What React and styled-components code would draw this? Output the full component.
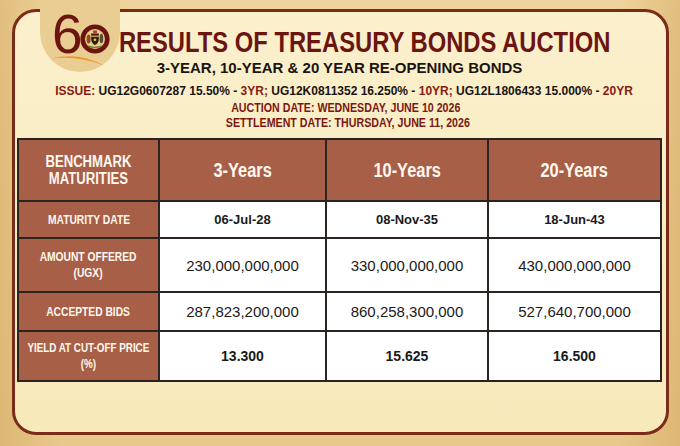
import React from 'react';
import styled, { createGlobalStyle } from 'styled-components';

const GlobalStyle = createGlobalStyle`
  html, body { margin: 0; padding: 0; }
  body {
    width: 680px;
    height: 446px;
    overflow: hidden;
    font-family: "Liberation Sans", Arial, sans-serif;
  }
  * { box-sizing: border-box; }
`;

const FONT = `"Liberation Sans", Arial, sans-serif`;

const Stage = styled.div`
  width: 680px;
  height: 446px;
  padding: 9px 11px 11px 12px;
  background:
    linear-gradient(90deg, rgba(196, 140, 60, 0.3) 0%, rgba(196, 140, 60, 0) 9%, rgba(196, 140, 60, 0) 91%, rgba(196, 140, 60, 0.3) 100%),
    linear-gradient(180deg, #eed49c 0%, #e8c98b 100%);
`;

const Panel = styled.div`
  position: relative;
  height: 100%;
  border: 3px solid #7a2c19;
  border-radius: 24px;
  background: linear-gradient(180deg, #fbf0cc 0%, #f8e9bb 100%);
  padding: 16px 4px 0 2px;
  display: flex;
  flex-direction: column;
`;

const LogoTab = styled.div`
  position: absolute;
  left: 25px;
  top: -12px;
  width: 80px;
  height: 72px;
  border-radius: 0 0 40px 40px;
  background: #eacd92;
`;

const Header = styled.header`
  display: flex;
  flex-direction: column;
  align-items: center;
`;

/* condensed lettering: the source face is a narrow one */
const Squeeze = styled.span`
  display: inline-block;
  white-space: nowrap;
  transform: translateX(${p => p.$dx || 0}px) scaleX(${p => p.$sx || 0.82});
  transform-origin: center;
`;

const Title = styled.h1`
  margin: 0;
  font-family: ${FONT};
  font-weight: 700;
  font-size: 29px;
  line-height: 29px;
  color: #6b1511;
  white-space: nowrap;
`;

const Subtitle = styled.h2`
  margin: 2px 0 0;
  font-family: ${FONT};
  font-weight: 700;
  font-size: 15px;
  line-height: 18px;
  color: #1b1410;
  white-space: nowrap;
`;

const IssueLine = styled.p`
  margin: 7px 0 0;
  padding-left: ${p => p.$shift || 0}px;
  font-family: ${FONT};
  font-weight: 700;
  font-size: 12px;
  line-height: 15px;
  color: #1b1410;
  white-space: nowrap;
`;

const Accent = styled.span`
  color: #861c12;
`;

const DateLine = styled.p`
  margin: ${p => (p.$first ? '1px' : '0')} 0 0;
  font-family: ${FONT};
  font-weight: 700;
  font-size: 13px;
  line-height: 15px;
  color: #7a1810;
  white-space: nowrap;
`;

const Table = styled.div`
  margin-top: 8px;
  display: grid;
  grid-template-columns: 139px 165px 160px 171px;
  grid-template-rows: 60px 35px 52px 37px 48px;
  gap: 2px;
  border: 2px solid #2a2320;
  background: #2a2320;
  width: 645px;
`;

const BrownCell = styled.div`
  display: flex;
  align-items: center;
  justify-content: center;
  text-align: center;
  overflow: visible;
  background: #a85f48;
  color: #fff8ee;
  font-family: ${FONT};
  font-weight: 700;
  font-size: ${p => p.$size || 12.5}px;
  line-height: ${p => p.$lh || 16}px;
`;

const DataCell = styled.div`
  display: flex;
  align-items: center;
  justify-content: center;
  text-align: center;
  background: #ffffff;
  color: #1a1a1a;
  font-family: ${FONT};
  font-weight: ${p => (p.$kind === 'amount' ? 400 : 700)};
  font-size: ${p => (p.$kind === 'amount' ? 15 : p.$kind === 'yield' ? 14 : 13)}px;
`;

const Logo = () => (
  <svg width="80" height="72" viewBox="0 0 80 72">
    <path d="M12 58.5 Q 38 51.5 64 65.5 Q 38 55.5 12 58.5 Z" fill="#ea9a2c" />
    <text x="12" y="53" fontFamily="Liberation Sans, Arial, sans-serif" fontSize="55" fill="#6b1410">
      6
    </text>
    <circle cx="55" cy="39" r="12.3" fill="#dcb66c" stroke="#6b1410" strokeWidth="4.6" />
    <circle cx="55" cy="39" r="9.6" fill="#e9cc86" />
    <rect x="53" y="30.5" width="4" height="2.6" rx="0.8" fill="#b8352a" />
    <ellipse cx="48.6" cy="39" rx="2" ry="4.6" fill="#8a4c22" />
    <ellipse cx="61.4" cy="38.5" rx="1.8" ry="4.8" fill="#5a4a3a" />
    <path d="M51.2 33.5 h7.6 v5.6 q0 4.2 -3.8 6 q-3.8 -1.8 -3.8 -6 z" fill="#2a1d14" />
    <rect x="51.2" y="35.6" width="7.6" height="1.2" fill="#e6bf3c" />
    <circle cx="55" cy="39.8" r="1.4" fill="#e6bf3c" />
    <path d="M48 46.2 q7 2.4 14 0" stroke="#6d7d2e" strokeWidth="1.4" fill="none" />
  </svg>
);

const years = ['3-Years', '10-Years', '20-Years'];

const rows = [
  { label: ['MATURITY DATE'], kind: 'date', values: ['06-Jul-28', '08-Nov-35', '18-Jun-43'] },
  { label: ['AMOUNT OFFERED', '(UGX)'], kind: 'amount', values: ['230,000,000,000', '330,000,000,000', '430,000,000,000'] },
  { label: ['ACCEPTED BIDS'], kind: 'amount', values: ['287,823,200,000', '860,258,300,000', '527,640,700,000'] },
  { label: ['YIELD AT CUT-OFF PRICE', '(%)'], kind: 'yield', values: ['13.300', '15.625', '16.500'], size: 12 },
];

const Lines = ({ text }) => (
  <Squeeze>
    {text.map((t, i) => (
      <React.Fragment key={i}>
        {i > 0 && <br />}
        {t}
      </React.Fragment>
    ))}
  </Squeeze>
);

export default function App() {
  return (
    <>
      <GlobalStyle />
      <Stage>
        <Panel>
          <LogoTab>
            <Logo />
          </LogoTab>
          <Header>
            <Title>
              <Squeeze $dx={25}>RESULTS OF TREASURY BONDS AUCTION</Squeeze>
            </Title>
            <Subtitle>3-YEAR, 10-YEAR &amp; 20 YEAR RE-OPENING BONDS</Subtitle>
            <IssueLine $shift={9}>
              <Accent>ISSUE:</Accent> UG12G0607287 15.50% - <Accent>3YR;</Accent> UG12K0811352 16.250% -{' '}
              <Accent>10YR;</Accent> UG12L1806433 15.000% - <Accent>20YR</Accent>
            </IssueLine>
            <DateLine $first>
              <Squeeze $dx={6}>AUCTION DATE: WEDNESDAY, JUNE 10 2026</Squeeze>
            </DateLine>
            <DateLine>
              <Squeeze $dx={8}>SETTLEMENT DATE: THURSDAY, JUNE 11, 2026</Squeeze>
            </DateLine>
          </Header>
          <Table>
            <BrownCell $size={16} $lh={17}>
              <Lines text={['BENCHMARK', 'MATURITIES']} />
            </BrownCell>
            {years.map(y => (
              <BrownCell key={y} $size={20} $lh={22}>
                <Lines text={[y]} />
              </BrownCell>
            ))}
            {rows.map(r => (
              <React.Fragment key={r.kind + r.values[0]}>
                <BrownCell $size={r.size || 12.5}>
                  <Lines text={r.label} />
                </BrownCell>
                {r.values.map(v => (
                  <DataCell key={v} $kind={r.kind}>
                    {v}
                  </DataCell>
                ))}
              </React.Fragment>
            ))}
          </Table>
        </Panel>
      </Stage>
    </>
  );
}
